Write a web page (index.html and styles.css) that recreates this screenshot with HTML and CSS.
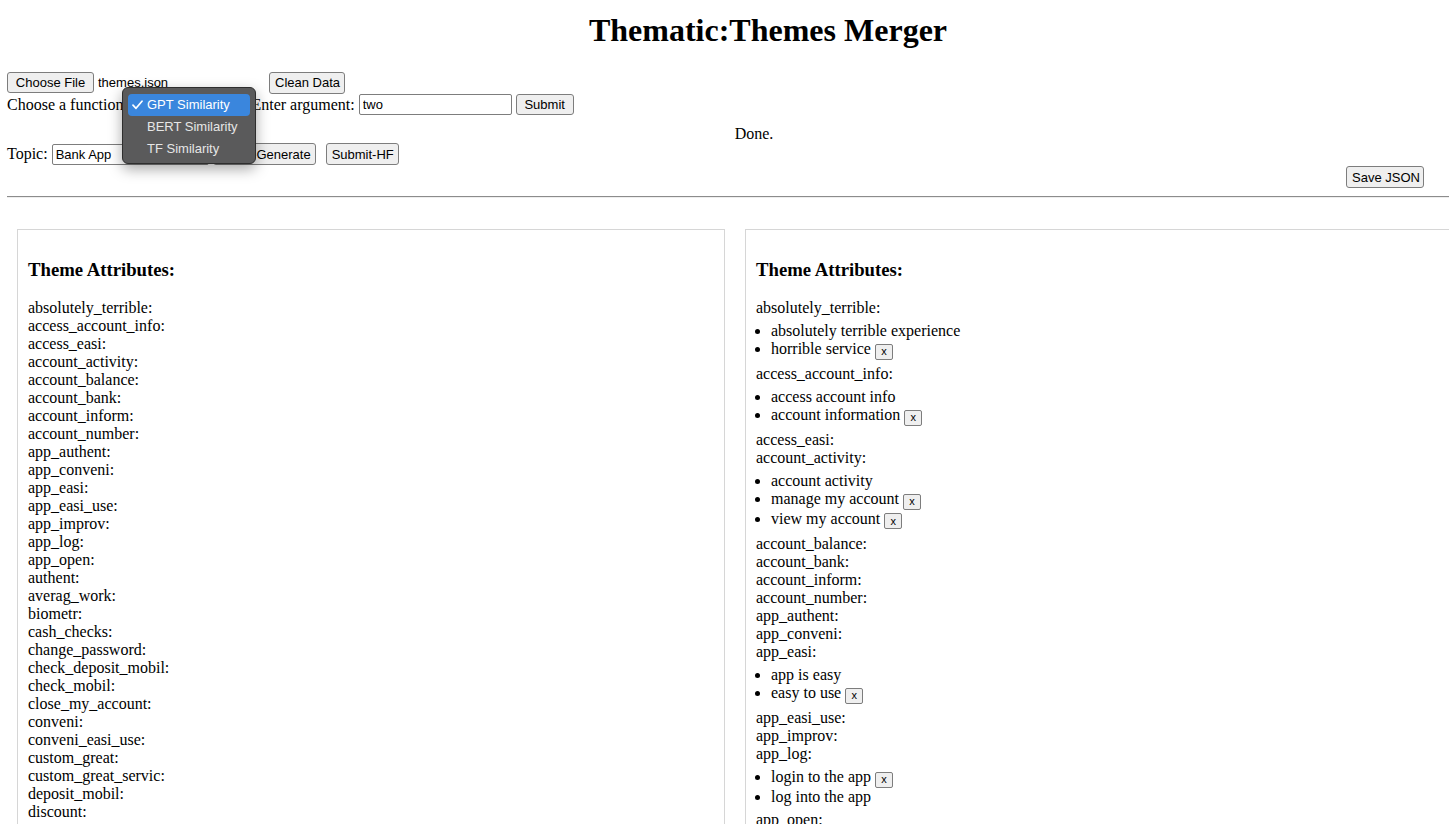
FILE: index.html
```html
<!DOCTYPE html>
<html lang="en">
<head>
<meta charset="utf-8">
<title>Thematic:Themes Merger</title>
<link rel="stylesheet" href="styles.css">
</head>
<body>
<div class="page">
  <h1 class="title">Thematic:Themes Merger</h1>

  <div class="row row-file">
    <button class="btn btn-choose">Choose File</button>
    <span class="file-name">themes.json</span>
    <button class="btn btn-clean">Clean Data</button>
  </div>

  <div class="row row-func">
    <span class="label">Choose a function</span>
    <select class="select">
      <option>GPT Similarity</option>
      <option>BERT Similarity</option>
      <option>TF Similarity</option>
    </select>
    <span class="label">Enter argument:</span>
    <input class="input input-arg" type="text" value="two">
    <button class="btn btn-submit">Submit</button>
  </div>

  <div class="status">Done.</div>

  <div class="row row-topic">
    <span class="label">Topic:</span>
    <input class="input input-topic" type="text" value="Bank App">
    <button class="btn btn-auto">Auto-Generate</button>
    <button class="btn btn-hf">Submit-HF</button>
  </div>

  <div class="row row-save">
    <button class="btn btn-save">Save JSON</button>
  </div>

  <hr class="divider">

  <div class="panels">
    <section class="panel">
      <h3 class="panel-title">Theme Attributes:</h3>
      <div class="theme">absolutely_terrible:</div>
      <div class="theme">access_account_info:</div>
      <div class="theme">access_easi:</div>
      <div class="theme">account_activity:</div>
      <div class="theme">account_balance:</div>
      <div class="theme">account_bank:</div>
      <div class="theme">account_inform:</div>
      <div class="theme">account_number:</div>
      <div class="theme">app_authent:</div>
      <div class="theme">app_conveni:</div>
      <div class="theme">app_easi:</div>
      <div class="theme">app_easi_use:</div>
      <div class="theme">app_improv:</div>
      <div class="theme">app_log:</div>
      <div class="theme">app_open:</div>
      <div class="theme">authent:</div>
      <div class="theme">averag_work:</div>
      <div class="theme">biometr:</div>
      <div class="theme">cash_checks:</div>
      <div class="theme">change_password:</div>
      <div class="theme">check_deposit_mobil:</div>
      <div class="theme">check_mobil:</div>
      <div class="theme">close_my_account:</div>
      <div class="theme">conveni:</div>
      <div class="theme">conveni_easi_use:</div>
      <div class="theme">custom_great:</div>
      <div class="theme">custom_great_servic:</div>
      <div class="theme">deposit_mobil:</div>
      <div class="theme">discount:</div>
    </section>

    <section class="panel">
      <h3 class="panel-title">Theme Attributes:</h3>
      <div class="theme">absolutely_terrible:</div>
      <ul class="phrases">
        <li>absolutely terrible experience</li>
        <li>horrible service <button class="xbtn">x</button></li>
      </ul>
      <div class="theme">access_account_info:</div>
      <ul class="phrases">
        <li>access account info</li>
        <li>account information <button class="xbtn">x</button></li>
      </ul>
      <div class="theme">access_easi:</div>
      <div class="theme">account_activity:</div>
      <ul class="phrases">
        <li>account activity</li>
        <li>manage my account <button class="xbtn">x</button></li>
        <li>view my account <button class="xbtn">x</button></li>
      </ul>
      <div class="theme">account_balance:</div>
      <div class="theme">account_bank:</div>
      <div class="theme">account_inform:</div>
      <div class="theme">account_number:</div>
      <div class="theme">app_authent:</div>
      <div class="theme">app_conveni:</div>
      <div class="theme">app_easi:</div>
      <ul class="phrases">
        <li>app is easy</li>
        <li>easy to use <button class="xbtn">x</button></li>
      </ul>
      <div class="theme">app_easi_use:</div>
      <div class="theme">app_improv:</div>
      <div class="theme">app_log:</div>
      <ul class="phrases">
        <li>login to the app <button class="xbtn">x</button></li>
        <li>log into the app</li>
      </ul>
      <div class="theme">app_open:</div>
    </section>
  </div>

  <div class="popup">
    <div class="popup-item is-selected">
      <svg class="check" width="11" height="10" viewBox="0 0 11 10" aria-hidden="true"><path d="M1 5.2 L4 8.3 L10 1.2" fill="none" stroke="#fff" stroke-width="1.7" stroke-linecap="round" stroke-linejoin="round"/></svg>
      GPT Similarity
    </div>
    <div class="popup-item">BERT Similarity</div>
    <div class="popup-item">TF Similarity</div>
  </div>
</div>
</body>
</html>
```

FILE: styles.css
```css
html {
  overflow: hidden;
}

body {
  margin: 0;
  background: #fff;
  color: #000;
  font-family: "Liberation Serif", "Times New Roman", serif;
  font-size: 16px;
}

.page {
  position: relative;
  width: 1522px;
  padding-left: 7px;
}

.title {
  margin: 0;
  padding-top: 12px;
  font-size: 32px;
  line-height: 37px;
  font-weight: bold;
  text-align: center;
}

.row {
  display: flex;
  align-items: center;
  gap: 4px;
  height: 21px;
}

.row-file {
  margin-top: 23px;
}

.row-func {
  margin-top: 1px;
}

.row-topic {
  margin-top: 0;
  height: 22px;
}

.row-save {
  margin-top: 1px;
  height: 22px;
  justify-content: flex-end;
  padding-right: 105px;
}

.label {
  line-height: 18px;
  white-space: nowrap;
}

.file-name {
  width: 167px;
  font-family: "Liberation Sans", Arial, sans-serif;
  font-size: 13px;
}

.btn {
  appearance: none;
  box-sizing: border-box;
  height: 21px;
  padding: 0 5px;
  border: 1px solid #7d7d7d;
  border-radius: 3px;
  background: #efefef;
  color: #000;
  font-family: "Liberation Sans", Arial, sans-serif;
  font-size: 13px;
  line-height: 19px;
  text-align: center;
  white-space: nowrap;
}

.btn-choose { width: 87px; }
.btn-clean { width: 76px; height: 22px; }
.btn-submit { width: 58px; }
.btn-auto { width: 103px; height: 22px; padding-right: 4px; text-align: right; }
.btn-hf { width: 73px; height: 22px; margin-left: 6px; }
.btn-save { width: 78px; height: 22px; }

.select {
  appearance: none;
  box-sizing: border-box;
  width: 120px;
  height: 21px;
  border: 1px solid #7d7d7d;
  border-radius: 3px;
  background: #fff;
  font-family: "Liberation Sans", Arial, sans-serif;
  font-size: 13px;
}

.input {
  box-sizing: border-box;
  height: 21px;
  padding: 0 3px;
  border: 1px solid #7d7d7d;
  border-radius: 2px;
  background: #fff;
  color: #000;
  font-family: "Liberation Sans", Arial, sans-serif;
  font-size: 13px;
}

.input-arg { width: 153px; }
.input-topic { width: 157px; }

.status {
  margin-top: 10px;
  padding-right: 28px;
  line-height: 18px;
  text-align: center;
}

.divider {
  margin: 8px 0 0;
  border: 0;
  border-top: 1px solid #8c8c8c;
  border-bottom: 1px solid #eeeeee;
  height: 0;
}

.panels {
  display: flex;
  margin-top: 31px;
}

.panel {
  flex: 0 0 auto;
  box-sizing: border-box;
  width: 708px;
  margin: 0 10px;
  padding: 10px;
  border: 1px solid #d6d6d6;
}

.panel-title {
  margin: 19px 0 18px;
  font-size: 18.72px;
  line-height: 22px;
  font-weight: bold;
}

.theme {
  line-height: 18px;
}

.phrases {
  margin: 5.3px 0;
  padding-left: 15px;
  line-height: 18px;
}

.xbtn {
  appearance: none;
  box-sizing: border-box;
  display: inline-block;
  height: 16px;
  width: 18px;
  padding: 0;
  border: 1px solid #7d7d7d;
  border-radius: 2px;
  background: #efefef;
  color: #000;
  font-family: "Liberation Sans", Arial, sans-serif;
  font-size: 11px;
  line-height: 13px;
  vertical-align: -1px;
}

.popup {
  position: absolute;
  left: 122px;
  top: 87px;
  box-sizing: border-box;
  width: 134px;
  height: 77px;
  padding: 6px 5px 4px;
  border: 1px solid #2e2e2e;
  border-radius: 6px;
  background: #5a5a5b;
  box-shadow: 0 5px 14px rgba(0, 0, 0, 0.35);
  font-family: "Liberation Sans", Arial, sans-serif;
  font-size: 13px;
}

.popup-item {
  position: relative;
  height: 22px;
  padding-left: 19px;
  border-radius: 4px;
  color: #e6e6e6;
  line-height: 22px;
  white-space: nowrap;
}

.popup-item.is-selected {
  background: #3a86dd;
  color: #fff;
}

.check {
  position: absolute;
  left: 4px;
  top: 6px;
}
```
